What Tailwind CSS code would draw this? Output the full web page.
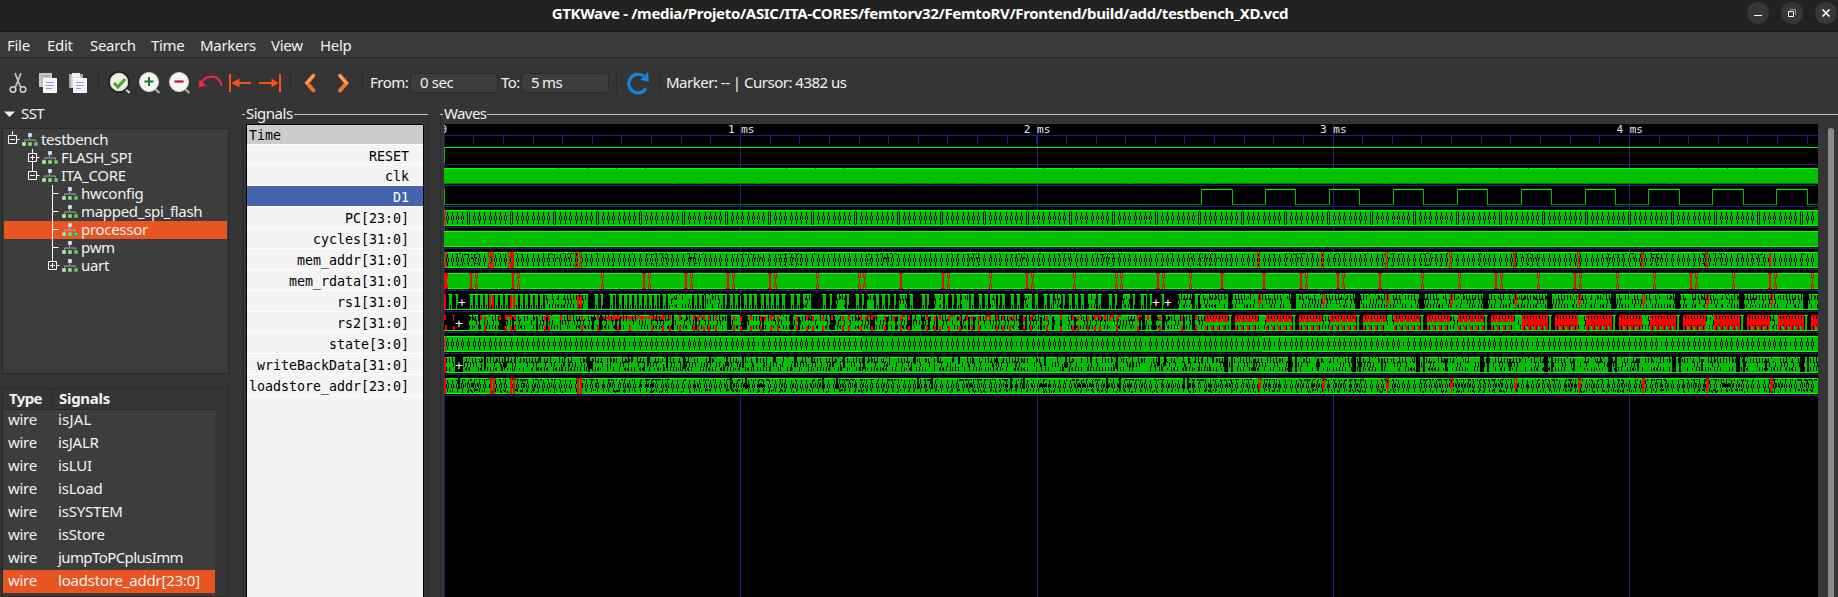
<!DOCTYPE html>
<html lang="en">
<head>
<meta charset="utf-8">
<title>GTKWave</title>
<script src="https://cdn.jsdelivr.net/npm/@tailwindcss/browser@4"></script>
</head>
<body class="h-[597px] w-[1838px] overflow-hidden bg-[#353535] font-['Noto_Sans',sans-serif] text-[15px] leading-none tracking-[-0.3px] text-[#f2f2f2] flex flex-col">
<svg class="hidden">
  <symbol id="mod" viewBox="0 0 16 14"><path d="M6 0h4v4H6z" fill="#a9c9f2"/><path d="M7 1h2v2H7z" fill="#dcebfb"/><path d="M7.500 4v2.500M2.500 8.500V7H13.500v1.500" fill="none" stroke="#aaa"/><path d="M0 9h4v4H0z" fill="#86cb7a"/><path d="M1 10h2v2H1z" fill="#c4ecb8"/><path d="M6 9h4v4H6z" fill="#64b85c"/><path d="M7 10h2v2H7z" fill="#a5e09a"/><path d="M12 9h4v4h-4z" fill="#48a347"/><path d="M13 10h2v2h-2z" fill="#7acb76"/></symbol>
</svg>

<header class="flex h-8 shrink-0 border-b border-[#171717] bg-[#222222]">
  <div class="w-[347px]"></div>
  <h1 class="grow pt-[6px] text-center font-bold whitespace-nowrap text-white tracking-[-0.33px]">GTKWave - /media/Projeto/ASIC/ITA-CORES/femtorv32/FemtoRV/Frontend/build/add/testbench_XD.vcd</h1>
  <div class="flex w-[345px] justify-end gap-3 pt-[2px] pr-[1px]">
    <svg class="size-[22px]" viewBox="0 0 22 22"><circle cx="11" cy="11" r="11" fill="#373737"/><path d="M7 13.500h8" stroke="#fff"/></svg>
    <svg class="size-[22px]" viewBox="0 0 22 22"><circle cx="11" cy="11" r="11" fill="#373737"/><path d="M7.500 9.500h5v5h-5z" fill="none" stroke="#fff"/><path d="M9 7.500h5.500V13" fill="none" stroke="#999"/></svg>
    <svg class="size-[22px]" viewBox="0 0 22 22"><circle cx="11" cy="11" r="11" fill="#373737"/><path d="M7.500 7.500l7 7m0-7l-7 7" stroke="#fff" stroke-width="1.700"/></svg>
  </div>
</header>

<nav class="flex h-[26px] shrink-0 gap-4 border-b border-[#272727] bg-[#3a3a3a] pt-[6px] pl-[7px]">
  <span class="w-6">File</span><span class="w-[27px]">Edit</span><span class="w-[45px]">Search</span><span class="w-[33px]">Time</span><span class="w-[55px]">Markers</span><span class="w-[33px]">View</span><span>Help</span>
</nav>

<div class="flex h-[47px] shrink-0 items-center pt-[3px] pl-[3px]">
  <svg class="w-[30px] h-6" viewBox="0 0 30 24"><g fill="none" stroke="#bdbdbd" stroke-width="1.800"><path d="M12 2l5.500 14M18 2l-5.500 14"/><circle cx="10" cy="18.500" r="2.800" stroke="#d5d5d5" stroke-width="1.500"/><circle cx="20" cy="18.500" r="2.800" stroke="#d5d5d5" stroke-width="1.500"/></g></svg>
  <svg class="w-[30px] h-6" viewBox="0 0 30 24"><path d="M6 2h13v14H6z" fill="#c9c9c9"/><path d="M8 5h9M8 8h5M8 11h3" stroke="#999"/><path d="M10.500 7.500h13v14h-13z" fill="#f3f3f3" stroke="#fff"/><path d="M13 11.500h8M13 14.500h8M13 17.500h6" stroke="#9a9ae8"/></svg>
  <svg class="w-[30px] h-6" viewBox="0 0 30 24"><path d="M6 3h14v14H6z" fill="#a8a8a8"/><path d="M8 5h10v12H8z" fill="#d5d5d5"/><path d="M9 2h8v4H9z" fill="#f0f0f0"/><path d="M10.500 7.500h13v14h-13z" fill="#f3f3f3" stroke="#fff"/><path d="M13 11.500h8M13 14.500h8M13 17.500h5" stroke="#9a9ae8"/></svg>
  <div class="mr-[6px] ml-[5px] h-5 w-px bg-[#2a2a2a]"></div>
  <svg class="w-[30px] h-6" viewBox="0 0 30 24"><path d="M19 17l7 6" stroke="#1d1d1d" stroke-width="4"/><path d="M20 18l5 4" stroke="#c9c9c0" stroke-width="2.500"/><circle cx="14" cy="11" r="10" fill="#efefea" stroke="#1b1b1b" stroke-width="1.500"/><circle cx="14" cy="11" r="8.500" fill="none" stroke="#cfcfc4"/><path d="M9 12l4 4 7-8" fill="none" stroke="#43a91f" stroke-width="3"/></svg>
  <svg class="w-[30px] h-6" viewBox="0 0 30 24"><path d="M19 17l6 5.500" stroke="#222" stroke-width="4"/><path d="M20 18l4.500 4" stroke="#aaaaa0" stroke-width="2.500"/><circle cx="14" cy="11" r="9.500" fill="#f6f6f3" stroke="#d3d3c8"/><path d="M14 6v9M9.500 10.500h9" stroke="#11802a" stroke-width="2"/></svg>
  <svg class="w-[30px] h-6" viewBox="0 0 30 24"><path d="M19 17l6 5.500" stroke="#222" stroke-width="4"/><path d="M20 18l4.500 4" stroke="#aaaaa0" stroke-width="2.500"/><circle cx="14" cy="11" r="9.500" fill="#f6f6f3" stroke="#d3d3c8"/><path d="M9.500 10.500h9" stroke="#c01030" stroke-width="2.200"/></svg>
  <svg class="w-[30px] h-6" viewBox="0 0 30 24"><path d="M6 12Q10 5.500 17 5.500Q25 6 26.500 15" fill="none" stroke="#ef2745" stroke-width="2"/><path d="M3.500 16.500l1-8 6.500 6z" fill="#ef2745"/></svg>
  <svg class="w-[30px] h-6" viewBox="0 0 30 24"><path d="M5 3v18M9 12h17" stroke="#f95314" stroke-width="2"/><path d="M6.500 12l8-4.500v9z" fill="#f95314"/></svg>
  <svg class="w-[30px] h-6" viewBox="0 0 30 24"><path d="M25 3v18M4 12h17" stroke="#f95314" stroke-width="2"/><path d="M23.500 12l-7-4.500v9z" fill="#f95314"/></svg>
  <div class="mr-1 ml-[5px] h-5 w-px bg-[#2a2a2a]"></div>
  <svg class="w-[30px] h-6" viewBox="0 0 30 24"><path d="M18.500 4.500L12 12l6.500 7.500" fill="none" stroke="#ee742e" stroke-width="4" stroke-linecap="round"/><path d="M18 5l-6 7" stroke="#f6a45f" stroke-width="2.500" stroke-linecap="round"/></svg>
  <svg class="ml-[3px] w-[30px] h-6" viewBox="0 0 30 24"><path d="M12 4.500l6.500 7.500-6.500 7.500" fill="none" stroke="#ee742e" stroke-width="4" stroke-linecap="round"/><path d="M12 5l6 7" stroke="#f6a45f" stroke-width="2.500" stroke-linecap="round"/></svg>
  <div class="mr-[7px] ml-1 h-5 w-px bg-[#2a2a2a]"></div>
  <span class="-mt-[2px] w-[40px] tracking-[-0.5px]">From:</span>
  <div class="flex h-5 w-[88px] items-center rounded border border-[#2b2b2b] bg-[#3d3d3d] pb-[2px] pl-[9px] tracking-[-0.4px]">0 sec</div>
  <span class="-mt-[2px] ml-[3px] w-[20px] tracking-[-0.5px]">To:</span>
  <div class="flex h-5 w-[88px] items-center rounded border border-[#2b2b2b] bg-[#3d3d3d] pb-[2px] pl-[9px] tracking-[-0.7px]">5 ms</div>
  <div class="ml-[7px] h-5 w-px bg-[#2a2a2a]"></div>
  <svg class="mx-[9px] h-6 w-6" viewBox="0 0 24 24"><path d="M20 17.500A9.300 9.300 0 1 1 17.500 5" fill="none" stroke="#1c82dc" stroke-width="3.200"/><path d="M22 1l1 9.500-9-1.500z" fill="#1c82dc"/></svg>
  <div class="mr-[6px] h-5 w-px bg-[#2a2a2a]"></div>
  <span class="-mt-[2px] whitespace-pre tracking-[-0.5px]">Marker: -- | Cursor: 4382 us</span>
</div>

<main class="flex h-[492px] shrink-0">
  <aside class="flex w-[242px] flex-col pl-[2px]">
    <div class="flex h-[23px] items-start gap-[6px] pt-px pl-[2px]">
      <svg class="mt-[5px] h-[6px] w-[11px]" viewBox="0 0 11 6"><path d="M0 0.500h11L5.500 6z" fill="#f0f0f0"/></svg><span class="tracking-[-0.6px]">SST</span>
    </div>
    <ul class="h-[246px] w-[227px] border border-[#2a2a2a] bg-[#3d3d3d] px-px pt-[2px] tracking-[-0.3px] [&>li]:flex [&>li]:h-[18px] [&>li]:items-center [&>li>span]:-mt-[2px]" id="tree"></ul>
    <div class="mt-[14px] flex h-[209px] w-[227px] flex-col border border-[#2a2a2a]">
      <div class="flex h-[21px] w-[212px] shrink-0 border-b border-[#2a2a2a] font-bold">
        <span class="w-[50px] border-r border-[#2a2a2a] pt-[2px] pl-[6px] tracking-[-0.6px]">Type</span><span class="pt-[2px] pl-[6px]">Signals</span>
      </div>
      <div id="wires" class="w-[212px] grow bg-[#3d3d3d]"></div>
    </div>
  </aside>

  <section class="w-[186px]">
    <div class="flex h-[19px] items-start tracking-[-0.5px]"><i class="mt-[9px] h-px w-[3px] bg-[#c5cad0]"></i><span class="ml-px w-[48px] pt-px">Signals</span><i class="mt-[9px] h-px grow bg-[#c5cad0]"></i></div>
    <div class="-mt-[9px] h-[482px] border-x border-[#2b2b2b] px-[3px] pt-[9px]">
      <div id="names" class="h-[480px] w-[178px] border border-black bg-[#f4f4f4] font-['DejaVu_Sans_Mono',monospace] text-[13.3px] tracking-normal text-black">
        <div class="h-[19px] bg-[#cccccc] pt-[4px] pl-[2px]">Time</div>
      </div>
    </div>
  </section>

  <section class="ml-[12px] w-[1398px]">
    <div class="flex h-[19px] items-start tracking-[-0.6px]"><i class="mt-[9px] h-px w-[3px] bg-[#c5cad0]"></i><span class="ml-px w-[43px] pt-px">Waves</span><i class="mt-[9px] h-px grow bg-[#c5cad0]"></i></div>
    <div class="-mt-[9px] flex h-[482px] border-l border-[#2b2b2b] pt-[9px] pl-[3px]">
      <svg id="wave" class="h-[473px] w-[1374px] shrink-0 bg-black font-['DejaVu_Sans_Mono',monospace] text-[11px] tracking-normal" viewBox="444 124 1374 473" shape-rendering="crispEdges"></svg>
      <div class="mt-1 ml-[10px] w-[6px] rounded-t-full bg-[#8b8b8b]"></div>
    </div>
  </section>
</main>

<script>
(() => {
/* ---- hierarchy tree ---- */
const nodes = [
  ['testbench', 0, '-'], ['FLASH_SPI', 1, '+'], ['ITA_CORE', 1, '-'], ['hwconfig', 2, ''],
  ['mapped_spi_flash', 2, ''], ['processor', 2, ''], ['pwm', 2, ''], ['uart', 2, '+']
];
const treeWidth = ['w-[18px]', 'w-[38px]', 'w-[58px]'];
document.getElementById('tree').innerHTML = nodes.map(([name, d, mark], i) => {
  const x = 8.5 + d * 20;
  let p = mark
    ? `M${x - 4} 4.500h8v8h-8zM${x - 2.5} 8.500h5M${x + 4} 8.500h3` + (mark === '+' ? `M${x} 6v5` : '') + `M${x} 0v4`
    : `M${x} 0v18M${x} 8.500h6`;
  if (i === 1) p += `M${x} 13v5`;
  return `<li class="${name === 'processor' ? 'bg-[#e95420]' : ''}"><svg class="${treeWidth[d]} h-[18px] shrink-0" viewBox="0 0 ${18 + d * 20} 18"><path d="${p}" fill="none" stroke="#fff"/></svg><svg class="mr-[3px] h-[14px] w-4 shrink-0"><use href="#mod"/></svg><span>${name}</span></li>`;
}).join('');

/* ---- signal list ---- */
document.getElementById('wires').innerHTML =
  ['isJAL', 'isJALR', 'isLUI', 'isLoad', 'isSYSTEM', 'isStore', 'jumpToPCplusImm', 'loadstore_addr[23:0]'].map((n, i) =>
    `<div class="flex h-[23px] pt-[3px] pl-[5px] ${i === 0 ? '-mt-px' : ''} ${i === 7 ? 'bg-[#e95420]' : ''}"><span class="w-[50px]">wire</span><span class="${i === 6 ? 'tracking-[-0.6px]' : i === 0 ? 'tracking-[0.2px]' : 'tracking-[-0.2px]'}">${n}</span></div>`).join('');

/* ---- displayed signals ---- */
document.getElementById('names').innerHTML +=
  ['RESET', 'clk', 'D1', 'PC[23:0]', 'cycles[31:0]', 'mem_addr[31:0]', 'mem_rdata[31:0]', 'rs1[31:0]', 'rs2[31:0]', 'state[3:0]', 'writeBackData[31:0]', 'loadstore_addr[23:0]'].map((n, i) =>
    `<div class="border-t border-white pr-[14px] text-right whitespace-pre pt-[5px] ${i === 0 ? 'h-5' : 'h-[21px]'} ${i === 2 ? 'bg-[#4464ac] text-white' : ''}">${n}</div>`).join('') + '<div class="border-t border-white"></div>';

/* ---- waveforms ---- */
const G = '#00c000', B = '#00ff00', D = '#008000', R = '#ff0000', K = '#000', N = '#20207a';
let out = '', run = '', cur = '';
const flush = () => { if (run) out += `<path d="${run}" fill="${cur}"/>`; run = ''; };
function r(x, y, w, h, c) { if (c !== cur) { flush(); cur = c; } run += `M${x} ${y}h${w}v${h}h-${w}z`; }
let seed = 12345;
const rnd = () => { seed = (seed * 16807) % 2147483647; return seed / 2147483647; };
const X0 = 444, X1 = 1818, top = i => 147 + 21 * i;

r(X0, 135, 1374, 1, N);
for (let i = 0; i <= 46; i++) r(Math.round(444 + i * 29.63 - 0.3), 135, 1, 9, N);
for (let i = 0; i < 5; i++) r(Math.round(444 + i * 296.3), 124, 1, 473, N);
for (let i = 0; i < 12; i++) r(X0, top(i) + 17, 1374, 1, N);

r(X0, 147, 1374, 1, B); r(X0, 147, 1, 16, G);
r(X0, 168, 1374, 15, G); r(X0, 168, 1374, 1, B); r(X0, 183, 1374, 1, D);
for (let k = 0; k < 11; k++) for (let j = 0; j < 4; j++) {
  r(558 + k * 114 + j * 29, k % 2 ? 183 : 168, 1, 1, k % 2 ? G : D);
}

r(X0, 189, 1, 16, G);
let px = X0;
[[1201, 1232], [1265, 1295], [1329, 1359], [1393, 1423], [1457, 1487], [1521, 1551], [1585, 1615], [1648, 1679], [1712, 1743], [1776, 1807]].forEach(([a, b]) => {
  r(px, 204, a - px, 1, D); r(a, 189, b - a, 1, B); r(a, 189, 1, 16, G); r(b, 189, 1, 16, G); px = b + 1;
});
r(px, 204, X1 - px, 1, D);

function bus(i) { r(X0, top(i), 1374, 16, G); r(X0, top(i), 1374, 1, B); r(X0, top(i) + 15, 1374, 1, B); }
function oval(x, y, wide) {
  if (wide) { r(x, y + 1, 1, 1, K); r(x - 1, y + 2, 1, 4, K); r(x + 1, y + 2, 1, 4, K); r(x - 1, y + 10, 1, 4, K); r(x + 1, y + 10, 1, 4, K); r(x, y + 14, 1, 1, K); }
  else { r(x, y + 2, 1, 4, K); r(x, y + 10, 1, 4, K); }
  r(x - 1, y + 6, 1, 4, K); r(x + 1, y + 6, 1, 4, K);
}
function ovals(i, gap) {
  const y = top(i); let x = 447, n = 0;
  while (x < X1 - 1) {
    n++;
    const wide = i === 3 && n % 8 === 5;
    if (gap && n % 24 === 11 && x > 600) r(x, y + 6, 1, 4, K); else oval(x, y, wide);
    x += n % 4 === 0 || n % 8 === 5 ? 6 : 5;
  }
}
function redX(x, y) { r(x - 1, y, 1, 5, R); r(x + 1, y, 1, 5, R); r(x, y + 4, 1, 8, R); r(x - 1, y + 11, 1, 5, R); r(x + 1, y + 11, 1, 5, R); }
function redI(x, y) { r(x - 1, y, 4, 1, R); r(x, y, 2, 16, R); r(x - 1, y + 15, 4, 1, R); }
const pulses = [1258, 1322, 1386, 1450, 1514, 1578, 1642, 1706, 1770];

bus(3); ovals(3); r(444, top(3) + 4, 1, 7, R); r(445, top(3), 1, 5, R); r(445, top(3) + 11, 1, 5, R);
bus(4);

bus(5); ovals(5);
{ const y = top(5);
  for (let x = 456; x < X1 - 2; x++) {
    const busy = Math.sin(x / 17) + Math.sin(x / 7.3) > 0.2;
    if (rnd() < (busy ? 0.4 : 0.05)) { r(x, y + 1 + Math.floor(rnd() * 2), 1, 1, K); if (rnd() < 0.6) r(x, y + 11 + Math.floor(rnd() * 4), 1, 1, K); }
    if (busy && rnd() < 0.15) r(x, y + 5, 1, 2, K);
  }
  [445, 489, 492, 509, 512, 576, 580].forEach(x => redX(x, y)); r(512, y, 2, 16, R);
  pulses.forEach((x, k) => k === 8 ? r(x - 1, y + 1, 2, 14, R) : redX(x, y)); }

bus(6);
{ const y = top(6); r(444, y, 3, 16, R); r(446, y, 2, 5, R); r(446, y + 11, 2, 5, R);
  [470, 512, 643, 685, 727, 769, 900, 942, 1026, 1157, 1221, 1263, 1300, 1337, 1379, 1495, 1574, 1690, 1769].forEach(x => redI(x, y));
  [476, 518, 602, 649, 691, 733, 775, 817, 859, 864, 948, 990, 1032, 1074, 1116, 1121, 1163, 1190, 1306, 1343, 1422, 1459, 1501, 1538, 1580, 1617, 1654, 1696, 1733, 1775, 1812].forEach(x => redX(x, y)); }

/* green / black columns of a busy bus between a and b */
function dense(a, b, y, dark) {
  r(a, y + 1, b - a, 14, G);
  r(a, y, b - a, 1, B);
  for (let x = a; x < b; x++) {
    const t = (x - a) % 3, v = rnd();
    if (t === 0) { if (v < dark) r(x, y + 1, 1, 5, K); if (rnd() < dark) r(x, y + 10, 1, 4, K); if (rnd() < dark * 0.5) r(x, y, 1, 1, K); }
    else if (t === 1) { if (v < dark * 0.8) r(x, y + 5, 1, 5, K); else if (v > 0.9) r(x, y + 2, 1, 3, K); }
    else if (v < dark * 0.35) { r(x, y + 4, 1, 2, K); r(x, y + 11, 1, 2, K); }
  }
}
/* widely spaced stems with a bright cap */
function stems(a, b, y) {
  r(a, y, b - a, 1, B);
  for (let x = a; x < b; x += 5) {
    const w = Math.min(4, b - x);
    r(x + 1, y + 1, Math.max(1, w - 1), 14, G);
    if (w > 2) r(x + 2, y + 11, 1, 4, K);
    if (x + 4 < b && rnd() < 0.5) r(x + 4, y, 1, 1, K);
  }
}

/* rs1 */
{ const y = top(7); r(X0, y, 1374, 16, K); r(X0, y + 15, 1374, 1, B); r(444, y, 2, 16, R);
  [[448, 452], [455, 458], [469, 546], [594, 598], [600, 603], [609, 616], [618, 660], [662, 676], [678, 704], [709, 727], [729, 740], [743, 758], [760, 780]].forEach(([a, b]) => stems(a, b, y));
  dense(546, 588, y, 0.7); dense(670, 690, y, 0.6); dense(706, 720, y, 0.6);
  [[781, 786], [790, 794], [796, 800], [822, 827], [829, 832], [846, 849], [855, 860], [861, 864], [875, 879], [881, 886], [887, 890], [893, 896], [909, 913], [921, 929], [944, 949], [951, 954], [956, 960], [970, 974], [978, 982], [984, 988], [997, 1000], [1001, 1005], [1010, 1014], [1016, 1020], [1034, 1038], [1043, 1048], [1049, 1053], [1062, 1065], [1068, 1072], [1074, 1078], [1080, 1084], [1097, 1102], [1108, 1112], [1114, 1117], [1132, 1135], [1140, 1147], [1149, 1152], [1161, 1164]].forEach(([a, b]) => stems(a, b, y));
  [[803, 811], [836, 845], [867, 874], [899, 907], [934, 943], [961, 969], [990, 996], [1024, 1032], [1054, 1061], [1088, 1096], [1122, 1130]].forEach(([a, b]) => dense(a, b, y, 0.6));
  dense(1178, 1192, y, 0.7); stems(1194, 1200, y); dense(1200, 1228, y, 0.7);
  for (let s = 1232; s < X1; s += 64) { const e = Math.min(s + 59, X1); dense(s, e, y, 0.72); }
  [489, 492, 510, 513, 577, 580].forEach(x => r(x, y + 1, 2, 14, R));
  pulses.forEach(x => { r(x, y, 3, 1, R); r(x, y + 1, 1, 9, R); r(x + 2, y + 1, 1, 9, R); r(x + 1, y + 9, 1, 6, R); }); }

/* rs2 */
{ const y = top(8); r(X0, y, 1374, 16, K); r(X0, y + 15, 1374, 1, B);
  r(444, y, 2, 5, R); r(445, y + 10, 2, 5, R); r(452, y, 3, 1, R); r(453, y + 1, 1, 5, R); r(453, y + 11, 2, 4, R);
  [[469, 479], [480, 499], [506, 560], [561, 600], [602, 672], [674, 727], [731, 741], [747, 790], [793, 830], [834, 870], [873, 907], [912, 960], [962, 1019], [1023, 1060], [1062, 1100], [1101, 1142], [1145, 1152], [1156, 1162], [1165, 1192], [1195, 1230]].forEach(([a, b]) => dense(a, b, y, 0.65));
  for (let x = 480; x < 1200; x += 4 + Math.floor(rnd() * 9)) {
    if (x > 600 && x < 662 || rnd() < 0.8) { r(x, y + (rnd() < 0.5 ? 0 : 1), 2, 5, R); if (rnd() < 0.7) r(x, y + 11, 2, 5, R); if (rnd() < 0.25) r(x + 2, y, 3, 2, R); }
    if (rnd() < 0.3) r(x + 2, y + 2, 2, 13, K);
  }
  for (let x = 603; x < 662; x += 3) { r(x, y + 1, 2, 3, R); }
  const redTeeth = (a, b, mid) => {
    r(a, y, b - a, 1, R);
    for (let x = a; x < b; x++) {
      const t = (x - a) % 6;
      if (t === 2) { r(x, y + 1, 1, 3, K); r(x, y + 10, 1, 5, K); r(x, y + 4, 1, 3, R); r(x, y + 7, 1, 3, mid); }
      else if (t === 5) { r(x, y + 1, 1, 3, K); r(x, y + 4, 1, 6, mid); r(x, y + 11, 1, 4, G); }
      else { r(x, y + 1, 1, 6, R); r(x, y + 7, 1, 4, mid); r(x, y + 11, 1, 4, t < 2 ? R : mid === R && t === 3 ? R : G); }
    }
  };
  r(1205, y, 26, 6, K); redTeeth(1205, 1228, G);
  for (let s = 1235; s < X1; s += 64) {
    r(s - 6, y, 6, 15, K); r(s - 7, y, 4, 1, B); r(s - 6, y + 1, 2, 14, G);
    redTeeth(s, Math.min(s + 23, X1), s > 1520 ? R : G);
    if (s + 23 < X1) dense(s + 23, Math.min(s + 31, X1), y, 0.5);
    if (s + 31 < X1) redTeeth(s + 31, Math.min(s + 57, X1), s > 1450 ? R : G);
  } }

/* state */
bus(9); ovals(9, true); r(444, top(9) + 4, 1, 7, R); r(445, top(9), 1, 5, R); r(445, top(9) + 11, 1, 5, R);
r(862, top(9), 400, 1, G); r(862, top(9) + 15, 400, 1, G);

/* writeBackData */
{ const y = top(10); r(X0, y + 15, 1374, 1, B);
  dense(446, 455, y, 0.6); dense(463, X1, y, 0.62); r(444, y, 2, 16, R);
  for (let x = 484; x < 1220; x += 5 + Math.floor(rnd() * 22)) { r(x, y, 1 + Math.floor(rnd() * 2), 5 + Math.floor(rnd() * 8), K); r(x - 3, y + 7, 1, 7, K); }
  r(590, y + 4, 3, 8, K); r(588, y, 2, 15, K);
  for (let x = 1224; x < X1; x += 64) { r(x, y, 4, 15, K); r(x + 7, y, 2, 15, K); r(x + 29, y + 2, 2, 12, K); } }

/* loadstore_addr */
bus(11); ovals(11);
{ const y = top(11);
  for (let x = 448; x < X1 - 1; x++) {
    const busy = Math.sin(x / 19) + Math.sin(x / 6.1) > -0.5;
    if (rnd() < (busy ? 0.5 : 0.12)) r(x, y + 1, 1, 1 + Math.floor(rnd() * 2), K);
    if (rnd() < (busy ? 0.2 : 0.05)) r(x, y + 5, 1, 4, K);
    if (rnd() < (busy ? 0.35 : 0.1)) r(x, y + 11 + Math.floor(rnd() * 3), 1, 2, K);
  }
  [458, 730, 745, 822, 836, 917, 931, 1010, 1023, 1106, 1119, 1183, 1187].forEach(x => r(x, y, 2, 11, K));
  r(444, y, 2, 16, R);
  [490, 493, 510, 513, 577, 580].forEach(x => { r(x, y, 2, 16, R); r(x - 1, y, 4, 1, R); });
  pulses.forEach((x, k) => { r(x, y, 3, 1, R); r(x, y + 1, 1, 9, R); r(x + 2, y + 1, 1, 9, R); r(x + 1, y + 5, 1, 10, R); if (k > 5) r(x, y + 1, 2, 14, R); }); }
flush();

/* labels */
const label = (x, y, t) => `<text x="${x}" y="${y}" fill="#e8e8e8">${t}</text>`;
out += label(440.5, 133, '0');
['1 ms', '2 ms', '3 ms', '4 ms'].forEach((t, i) => out += label(728 + i * 296.3 - (i ? 0.5 : 0), 133, t));
[[462, 7], [1156, 7], [1168, 7], [459, 8], [459, 10]].forEach(([x, i]) => {
  out += `<rect x="${x - 4}" y="${top(i) + 1}" width="8" height="14" fill="#000"/><text x="${x - 4}" y="${top(i) + 13}" font-size="13" fill="#f5f0e0">+</text>`;
});
document.getElementById('wave').innerHTML = out;
})();
</script>
</body>
</html>
